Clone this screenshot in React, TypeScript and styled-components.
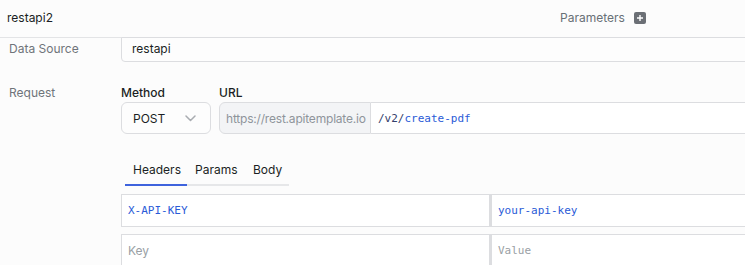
import React from "react";
import styled, { createGlobalStyle } from "styled-components";

const Global = createGlobalStyle`
  html, body { margin: 0; padding: 0; background: #fcfcfc; overflow: hidden; }
  body { font-family: Inter, "Noto Sans", sans-serif; font-size: 12px; color: #1b1f24; }
  * { box-sizing: border-box; }
`;

const Page = styled.div`
  width: 900px;
  background: #fcfcfc;
`;

const Header = styled.div`
  height: 38px;
  display: flex;
  align-items: center;
  border-bottom: 1px solid #e3e4e6;
`;

const Title = styled.div`
  flex: 0 0 560px;
  padding-left: 7px;
  padding-bottom: 2px;
  color: #1b1f24;
  font-size: 12px;
`;

const ParamLabel = styled.div`
  display: flex;
  align-items: center;
  gap: 9px;
  color: #687076;
  padding-bottom: 2px;
`;

const PlusBtn = styled.span`
  width: 12px;
  height: 12px;
  border-radius: 2px;
  background: #6b6f75;
  display: inline-flex;
  align-items: center;
  justify-content: center;
`;

const Row = styled.div<{ $pad?: number }>`
  display: grid;
  grid-template-columns: 121px 1fr;
  padding-top: ${(p) => p.$pad ?? 0}px;
`;

const Label = styled.div<{ $top?: number }>`
  padding-left: 9px;
  padding-top: ${(p) => p.$top ?? 0}px;
  color: #6f747a;
`;

const TextInput = styled.div`
  margin-top: -1px;
  height: 25px;
  border: 1px solid #dcdde0;
  border-radius: 0 0 4px 4px;
  background: #fdfdfd;
  padding: 3px 10px 0;
  color: #1b1f24;
`;

const Fields = styled.div`
  display: flex;
  gap: 8px;
`;

const Field = styled.div<{ $grow?: boolean }>`
  display: flex;
  flex-direction: column;
  flex: ${(p) => (p.$grow ? 1 : "0 0 auto")};
`;

const FieldLabel = styled.div`
  font-weight: 500;
  color: #1b1f24;
  height: 17px;
`;

const Select = styled.div`
  width: 90px;
  height: 32px;
  border: 1px solid #dcdde0;
  border-radius: 6px;
  background: #fdfdfd;
  display: flex;
  align-items: center;
  justify-content: space-between;
  padding: 0 14px 0 11px;
  color: #1b1f24;
`;

const UrlGroup = styled.div`
  display: flex;
  height: 32px;
`;

const Prefix = styled.div`
  width: 152px;
  border: 1px solid #dcdde0;
  border-radius: 6px 0 0 6px;
  background: #f3f4f6;
  color: #8f949b;
  display: flex;
  align-items: center;
  padding-left: 6px;
  letter-spacing: -0.2px;
  white-space: nowrap;
  overflow: hidden;
`;

const UrlInput = styled.div`
  flex: 1;
  border: 1px solid #dcdde0;
  border-left: none;
  border-radius: 0 6px 6px 0;
  background: #fff;
  display: flex;
  align-items: center;
  padding-left: 7px;
  font-family: "DejaVu Sans Mono", monospace;
  font-size: 11px;
`;

const Slash = styled.span`
  color: #34406b;
`;

const Blue = styled.span`
  color: #2a5bd7;
`;

const Tabs = styled.div`
  margin: 21px 0 0 4px;
  width: 164px;
  display: flex;
  border-bottom: 2px solid #e6e7e9;
`;

const Tab = styled.div<{ $active?: boolean; $w: number }>`
  width: ${(p) => p.$w}px;
  height: 31px;
  padding-left: 8px;
  padding-top: 7px;
  color: #1b1f24;
  margin-bottom: -2px;
  border-bottom: 2px solid ${(p) => (p.$active ? "#3e63dd" : "transparent")};
`;

const Table = styled.div`
  margin-top: 8px;
  display: flex;
  flex-direction: column;
  gap: 7px;
`;

const KvRow = styled.div`
  display: grid;
  grid-template-columns: 369px 369px;
  height: 33px;
`;

const Cell = styled.div<{ $mono?: boolean; $placeholder?: boolean }>`
  border: 1px solid #dcdde0;
  background: #fff;
  display: flex;
  align-items: center;
  padding-left: 6px;
  font-family: ${(p) => (p.$mono ? '"DejaVu Sans Mono", monospace' : 'Inter, "Noto Sans", sans-serif')};
  font-size: ${(p) => (p.$mono ? 11 : 12)}px;
  color: ${(p) => (p.$placeholder ? "#9a9fa5" : "#2a5bd7")};
  & + & {
    border-left: 2px solid #dcdde0;
  }
`;

const Chevron = () => (
  <svg width="11" height="7" viewBox="0 0 11 7" fill="none">
    <path d="M1 1l4.5 4.5L10 1" stroke="#a9acb1" strokeWidth="1.5" strokeLinecap="round" strokeLinejoin="round" />
  </svg>
);

export default function App() {
  return (
    <Page>
      <Global />
      <Header>
        <Title>restapi2</Title>
        <ParamLabel>
          Parameters
          <PlusBtn>
            <svg width="8" height="8" viewBox="0 0 8 8">
              <path d="M4 1v6M1 4h6" stroke="#fff" strokeWidth="1.4" />
            </svg>
          </PlusBtn>
        </ParamLabel>
      </Header>
      <Row>
        <Label $top={3}>Data Source</Label>
        <TextInput>restapi</TextInput>
      </Row>
      <Row $pad={23}>
        <Label>Request</Label>
        <div>
          <Fields>
            <Field>
              <FieldLabel>Method</FieldLabel>
              <Select>
                POST
                <Chevron />
              </Select>
            </Field>
            <Field $grow>
              <FieldLabel>URL</FieldLabel>
              <UrlGroup>
                <Prefix>https://rest.apitemplate.io</Prefix>
                <UrlInput>
                  <Slash>/v2/</Slash>
                  <Blue>create-pdf</Blue>
                </UrlInput>
              </UrlGroup>
            </Field>
          </Fields>
          <Tabs>
            <Tab $active $w={62}>Headers</Tab>
            <Tab $w={58}>Params</Tab>
            <Tab $w={44}>Body</Tab>
          </Tabs>
          <Table>
            <KvRow>
              <Cell $mono>X-API-KEY</Cell>
              <Cell $mono>your-api-key</Cell>
            </KvRow>
            <KvRow>
              <Cell $placeholder>Key</Cell>
              <Cell $mono $placeholder>Value</Cell>
            </KvRow>
          </Table>
        </div>
      </Row>
    </Page>
  );
}
